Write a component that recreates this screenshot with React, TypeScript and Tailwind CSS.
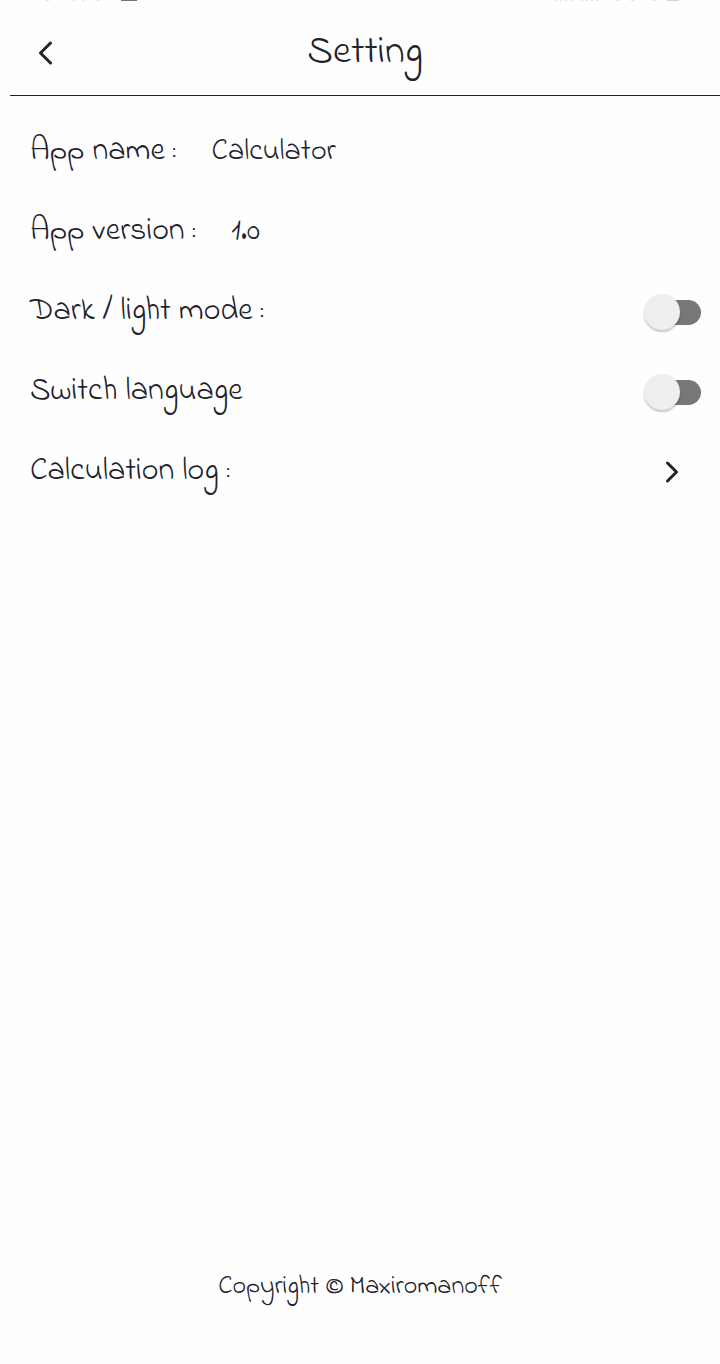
import { useState, type ReactNode } from "react";

function StatusMarks() {
  return (
    <svg className="absolute inset-x-0 top-0 h-px w-full" viewBox="0 0 720 1" preserveAspectRatio="none" aria-hidden="true">
      <path d="M46 .5h3M73 .5h2M82 .5h2M97 .5h3" stroke="#e3e3e3" />
      <path d="M121 .5h16" stroke="#747474" />
      <path d="M555 .5h2M560 .5h2M565 .5h2M571 .5h2M581 .5h2M586 .5h2M591 .5h2M597 .5h2M616 .5h3M631 .5h3M653 .5h3" stroke="#e3e3e3" />
      <path d="M667 .5h12" stroke="#d4d4d4" />
    </svg>
  );
}

function Row({ children }: { children: ReactNode }) {
  return <li className="flex h-20 items-center justify-between pr-[19px] pl-[30px]">{children}</li>;
}

function Field({ label, value }: { label: string; value: string }) {
  return (
    <Row>
      <p className="flex items-baseline gap-9">
        <span>{label}</span>
        <span className="text-[30px]">{value}</span>
      </p>
    </Row>
  );
}

function Toggle({ id, label }: { id: string; label: string }) {
  const [on, setOn] = useState(false);
  return (
    <Row>
      <label htmlFor={id}>{label}</label>
      <span className="relative flex h-9 w-[57px] items-center justify-end">
        <input
          id={id}
          type="checkbox"
          role="switch"
          checked={on}
          onChange={(e) => setOn(e.target.checked)}
          className="peer h-[25px] w-[50px] cursor-pointer appearance-none rounded-full bg-[#777779] checked:bg-[#4b8f8a]"
        />
        <span className="pointer-events-none absolute top-0 left-0 size-9 rounded-full bg-[#eeeeee] shadow-[0_2px_2px_rgba(0,0,0,0.22)] peer-checked:left-[21px]" />
      </span>
    </Row>
  );
}

export default function App() {
  return (
    <div className="relative flex min-h-screen flex-col bg-[#fefefe] font-['Indie_Flower','Lato',sans-serif] text-[32px] leading-9 font-light text-[#20222c] [font-variant-ligatures:none]">
      <StatusMarks />
      <header className="ml-[10px] grid h-24 grid-cols-[70px_1fr_70px] items-center border-b border-[#20222a] pt-[10px]">
        <button type="button" aria-label="Back" className="flex h-12 items-center justify-center">
          <svg className="h-6 w-4" viewBox="0 0 16 24" fill="none" stroke="currentColor" strokeWidth="3" strokeLinecap="round" strokeLinejoin="round" aria-hidden="true">
            <path d="M13.5 2 3.5 12l10 10" />
          </svg>
        </button>
        <h1 className="text-center text-[40px] leading-[44px]">Setting</h1>
      </header>
      <main className="grow pt-4">
        <ul>
          <Field label="App name :" value="Calculator" />
          <Field label="App version :" value="1.0" />
          <Toggle id="dark-mode" label="Dark / light mode :" />
          <Toggle id="language" label="Switch language" />
          <Row>
            <a href="#log" className="flex grow items-center justify-between pr-[22px]">
              <span>Calculation log :</span>
              <svg className="h-6 w-4" viewBox="0 0 16 24" fill="none" stroke="currentColor" strokeWidth="3" strokeLinecap="round" strokeLinejoin="round" aria-hidden="true">
                <path d="m4.5 3 9 9-9 9" />
              </svg>
            </a>
          </Row>
        </ul>
      </main>
      <footer className="pb-[59px] text-center text-[26px]">Copyright © Maxiromanoff</footer>
    </div>
  );
}
